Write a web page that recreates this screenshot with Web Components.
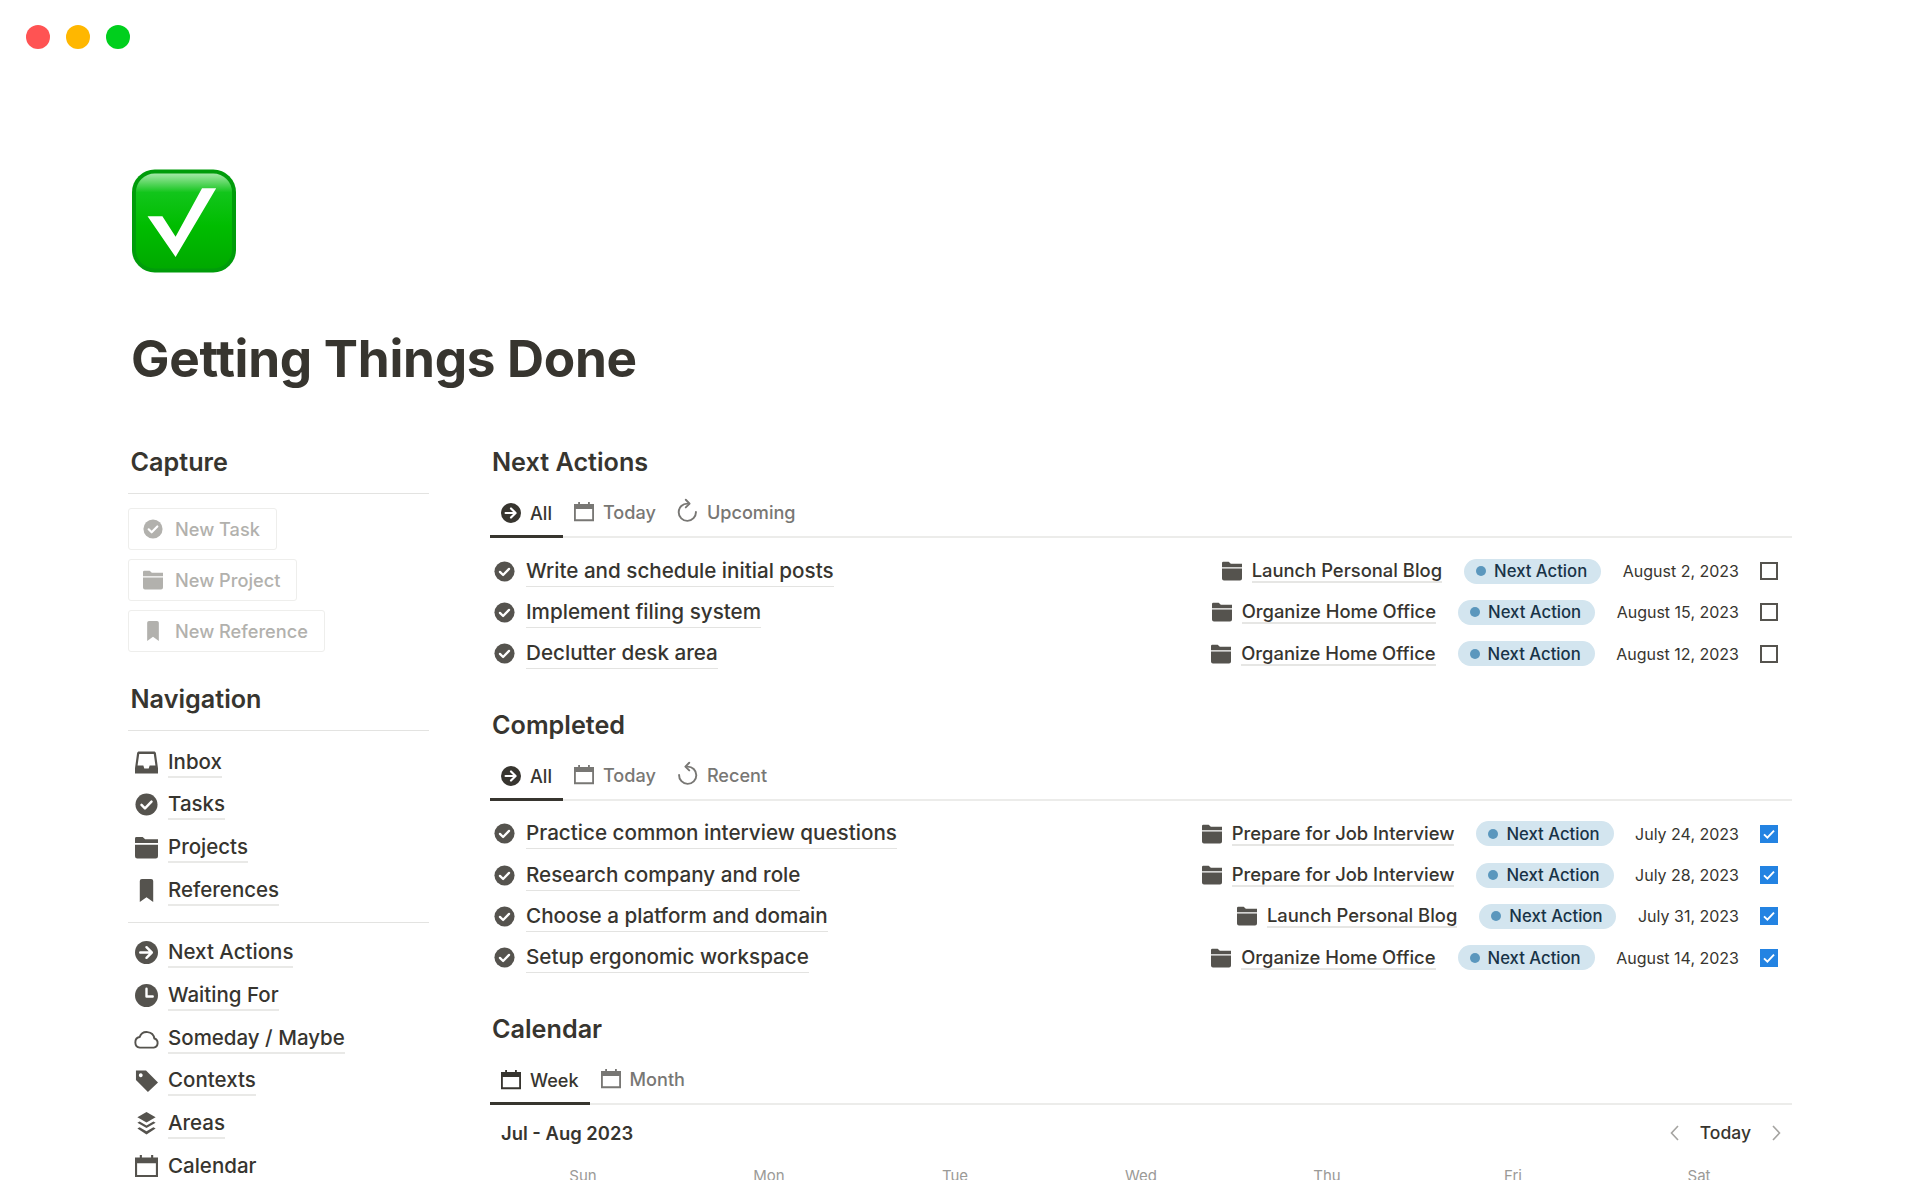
<!DOCTYPE html>
<html lang="en">
<head>
<meta charset="utf-8">
<title>Getting Things Done</title>
<style>
    html, body { margin: 0; background: #fff; }
    body { font-family: Inter, "Liberation Sans", sans-serif; color: #37352f; }
</style>
</head>
<body>
<gtd-page>
    <traffic-lights slot="chrome"></traffic-lights>
    <page-head slot="head" title="Getting Things Done"></page-head>

    <side-section slot="side" label="Capture">
        <capture-button icon="check">New Task</capture-button>
        <capture-button icon="folder">New Project</capture-button>
        <capture-button icon="bookmark">New Reference</capture-button>
    </side-section>
    <side-section slot="side" label="Navigation" style="--top: 10px">
        <nav-link icon="inbox">Inbox</nav-link>
        <nav-link icon="check">Tasks</nav-link>
        <nav-link icon="folder">Projects</nav-link>
        <nav-link icon="bookmark">References</nav-link>
        <side-rule></side-rule>
        <nav-link icon="arrow">Next Actions</nav-link>
        <nav-link icon="clock">Waiting For</nav-link>
        <nav-link icon="cloud">Someday / Maybe</nav-link>
        <nav-link icon="tag">Contexts</nav-link>
        <nav-link icon="stack">Areas</nav-link>
        <nav-link icon="calendar">Calendar</nav-link>
    </side-section>

    <view-section slot="main" label="Next Actions">
        <view-tab icon="arrow" active>All</view-tab>
        <view-tab icon="calendar">Today</view-tab>
        <view-tab icon="redo">Upcoming</view-tab>
        <task-row slot="body" project="Launch Personal Blog" date="August 2, 2023">Write and schedule initial posts</task-row>
        <task-row slot="body" project="Organize Home Office" date="August 15, 2023">Implement filing system</task-row>
        <task-row slot="body" project="Organize Home Office" date="August 12, 2023">Declutter desk area</task-row>
    </view-section>
    <view-section slot="main" label="Completed">
        <view-tab icon="arrow" active>All</view-tab>
        <view-tab icon="calendar">Today</view-tab>
        <view-tab icon="undo">Recent</view-tab>
        <task-row slot="body" done project="Prepare for Job Interview" date="July 24, 2023">Practice common interview questions</task-row>
        <task-row slot="body" done project="Prepare for Job Interview" date="July 28, 2023">Research company and role</task-row>
        <task-row slot="body" done project="Launch Personal Blog" date="July 31, 2023">Choose a platform and domain</task-row>
        <task-row slot="body" done project="Organize Home Office" date="August 14, 2023">Setup ergonomic workspace</task-row>
    </view-section>
    <view-section slot="main" label="Calendar">
        <view-tab icon="calendar" active>Week</view-tab>
        <view-tab icon="calendar">Month</view-tab>
        <week-calendar slot="body" range="Jul - Aug 2023"></week-calendar>
    </view-section>
</gtd-page>

<script>
const ICONS = {
    check: '<circle cx="12" cy="12" r="11.5"/><path d="M6.8 12.4l3.6 3.6 6.8-7" fill="none" stroke="#fff" stroke-width="2.6" stroke-linecap="round" stroke-linejoin="round"/>',
    folder: '<path d="M0 2.5A1.5 1.5 0 0 1 1.5 1H8l2.6 2.4H24v4H0z"/><path d="M0 9h24v12a2.4 2.4 0 0 1-2.4 2.4H2.4A2.4 2.4 0 0 1 0 21z"/>',
    bookmark: '<path d="M5 2.2A2.2 2.2 0 0 1 7.2 0h9.6A2.2 2.2 0 0 1 19 2.2V24l-7-5-7 5z"/>',
    inbox: '<path fill-rule="evenodd" d="M4.2 .5h15.6c1 0 1.8.7 2 1.700L24 18v5.500H0V18L2.200 2.200C2.400 1.200 3.200 .5 4.200 .5zM4.400 3L2.700 15h6l1 3.200h4.600l1-3.200h6L19.600 3z"/>',
    arrow: '<circle cx="12" cy="12" r="12"/><path d="M5.500 12h11.500M12 6.500l5.500 5.500-5.500 5.500" fill="none" stroke="#fff" stroke-width="2.600" stroke-linecap="round" stroke-linejoin="round"/>',
    clock: '<circle cx="12" cy="12" r="12"/><path d="M12 5v8h6.500" fill="none" stroke="#fff" stroke-width="2.500" stroke-linecap="round" stroke-linejoin="round"/>',
    cloud: '<path d="M5 21.500h14.500A4.900 4.900 0 0 0 20.200 12 8 8 0 0 0 4.800 10.500 5.600 5.600 0 0 0 5 21.500z" fill="none" stroke="currentColor" stroke-width="2" stroke-linejoin="round"/>',
    tag: '<path fill-rule="evenodd" d="M1 1.500h10.500L24 14 13.500 24 1 11.500zM6 4.500a2 2 0 1 0 .01 0z"/>',
    stack: '<path d="M12 0l9.500 5.500L12 11 2.500 5.500z"/><path d="M4.800 9.800L12 14l7.200-4.200 2.300 1.400L12 16.800l-9.500-5.600z"/><path d="M4.800 15.800L12 20l7.200-4.200 2.300 1.400L12 23.500l-9.500-6.300z"/>',
    calendar: '<path fill-rule="evenodd" d="M5 0h2.200v2.500h9.600V0H19v2.500h5V23H0V2.500h5zM2.200 8.500v12.300h19.600V8.500z"/>',
    redo: '<path d="M20.800 13.500A9 9 0 1 1 12 4.800" fill="none" stroke="currentColor" stroke-width="2" stroke-linecap="round"/><path d="M10.200 .8l4 4-4 4" fill="none" stroke="currentColor" stroke-width="2" stroke-linecap="round" stroke-linejoin="round"/>',
    undo: '<path d="M3.200 13.500A9 9 0 1 0 12 4.800" fill="none" stroke="currentColor" stroke-width="2" stroke-linecap="round"/><path d="M13.800 .8l-4 4 4 4" fill="none" stroke="currentColor" stroke-width="2" stroke-linecap="round" stroke-linejoin="round"/>'
};

function iconSvg(name, size) {
    return `<svg width="${size}" height="${size}" viewBox="0 0 24 24" fill="currentColor" style="display:block;flex:none;overflow:visible">${ICONS[name]}</svg>`;
}

// Small helper so every element below is the same few lines
function define(tag, render) {
    customElements.define(tag, class extends HTMLElement {
        constructor() {
            super();
            this.attachShadow({ mode: 'open' });
        }
        connectedCallback() {
            this.shadowRoot.innerHTML = render(this);
        }
    });
}

define('gtd-page', () => `
    <style>
        :host { display: block; width: 1920px; height: 1180px; overflow: hidden; }
        .cols { display: grid; grid-template-columns: 301px 1302px; column-gap: 61px; padding-left: 128px; }
        .stack { display: flex; flex-direction: column; }
    </style>
    <slot name="chrome"></slot>
    <slot name="head"></slot>
    <div class="cols">
        <div class="stack"><slot name="side"></slot></div>
        <div class="stack"><slot name="main"></slot></div>
    </div>
`);

define('traffic-lights', () => `
    <style>
        :host { display: flex; gap: 16px; padding: 25px 0 0 26px; height: 24px; }
        i { width: 24px; height: 24px; border-radius: 50%; }
    </style>
    <i style="background:#ff5353"></i>
    <i style="background:#ffb700"></i>
    <i style="background:#00cf1d"></i>
`);

define('page-head', el => `
    <style>
        :host { display: block; padding: 120px 0 0 132px; height: 271px; box-sizing: content-box; }
        svg { display: block; }
        h1 { margin: 54px 0 0 -1px; font-size: 51.300px; line-height: 60px; font-weight: 700; letter-spacing: -0.3px; color: #37352f; }
    </style>
    <svg width="104" height="105" viewBox="0 0 105 105">
        <defs>
            <linearGradient id="g" x1="0" y1="0" x2="0" y2="1">
                <stop offset="0" stop-color="#a5e8a8"/>
                <stop offset=".2" stop-color="#12c51b"/>
                <stop offset=".55" stop-color="#00bd00"/>
                <stop offset="1" stop-color="#00a900"/>
            </linearGradient>
        </defs>
        <rect x="0" y="0" width="105" height="104" rx="23" fill="#009c0a"/>
        <rect x="4" y="4" width="97" height="96" rx="19" fill="url(#g)"/>
        <path d="M15.700 47.300H30.700L44 68 70.700 19H85L44 88.300z" fill="#fff"/>
    </svg>
    <h1>${el.getAttribute('title')}</h1>
`);

define('side-section', el => `
    <style>
        :host { display: block; }
        h2 { margin: 0; padding-left: 2.500px; font-size: 25.200px; line-height: 44px; height: 54px; font-weight: 600; box-sizing: border-box; border-bottom: 1px solid #e3e3e1; }
        .body { display: block; padding-top: var(--top, 14px); padding-bottom: 16px; }
    </style>
    <h2>${el.getAttribute('label')}</h2>
    <div class="body"><slot></slot></div>
`);

define('side-rule', () => `
    <style>:host { display: block; height: 1px; background: #e3e3e1; margin: 10px 0 9px; }</style>
`);

define('capture-button', el => `
    <style>
        :host { display: table; height: 42px; margin-bottom: 9px; box-sizing: border-box; border: 1px solid #eeeeec; border-radius: 3px; color: #b2b1ad; }
        div { display: flex; align-items: center; height: 40px; padding: 0 16px 0 14px; gap: 12px; font-size: 18.200px; font-weight: 500; }
    </style>
    <div>${iconSvg(el.getAttribute('icon'), 20)}<span><slot></slot></span></div>
`);

define('nav-link', el => `
    <style>
        :host { display: flex; align-items: center; height: 42.670px; padding-left: 7px; gap: 10px; color: #37352f; }
        .ic { color: #55534e; flex: none; }
        span { font-size: 20.500px; font-weight: 500; line-height: 29px; border-bottom: 2px solid #e9e9e7; }
    </style>
    <div class="ic">${iconSvg(el.getAttribute('icon'), 23)}</div>
    <span><slot></slot></span>
`);

define('view-section', el => `
    <style>
        :host { display: block; }
        h2 { margin: 0; padding-left: 2px; font-size: 25.200px; line-height: 44px; font-weight: 600; }
        .tabs { display: flex; height: 54px; box-sizing: border-box; border-bottom: 2px solid #ececea; }
        .body { display: block; padding: 12.500px 0 28.500px; }
    </style>
    <h2>${el.getAttribute('label')}</h2>
    <div class="tabs"><slot></slot></div>
    <div class="body"><slot name="body"></slot></div>
`);

define('view-tab', el => {
    // the redo and undo glyphs stand a little taller than the others
    const name = el.getAttribute('icon');
    const round = name === 'redo' || name === 'undo';
    return `
    <style>
        :host { display: flex; align-items: center; gap: 9px; height: 52px; padding: 4px 11px 0; box-sizing: border-box; font-size: 18.100px; font-weight: 500; color: #787774; }
        :host([active]) { color: #37352f; box-shadow: inset 0 -3px 0 #37352f; height: 54px; }
        .ic { width: 20px; display: flex; justify-content: center; margin-top: ${round ? -3 : 0}px; }
    </style>
    <div class="ic">${iconSvg(name, round ? 23 : 20)}</div>
    <span><slot></slot></span>
`;
});

define('task-row', el => `
    <style>
        :host { display: flex; align-items: center; height: 41.250px; padding: 0 14px 0 4px; }
        .check { color: #55534e; margin-right: 11px; }
        .title { font-size: 20.650px; font-weight: 500; line-height: 30px; border-bottom: 1px solid #e3e3e1; }
        .meta { margin-left: auto; display: flex; align-items: center; }
        .folder { color: #55534e; margin-right: 10px; }
        .project { font-size: 18.400px; font-weight: 500; line-height: 21px; border-bottom: 2px solid #e6e6e4; margin-top: 1px; }
        .pill { display: flex; align-items: center; gap: 8px; height: 25px; margin-left: 22px; padding: 0 14px 0 12px; border-radius: 13px; background: #d3e5ef; color: #183347; font-size: 16.700px; font-weight: 500; }
        .pill i { width: 10px; height: 10px; border-radius: 50%; background: #5b97bd; }
        .date { margin-left: 21.500px; font-size: 16px; color: #37352f; }
        .box { margin-left: 21px; width: 18px; height: 18px; box-sizing: border-box; border: 2px solid #55534e; }
        .box.on { border: 0; background: #2383e2; display: flex; align-items: center; justify-content: center; }
    </style>
    <div class="check">${iconSvg('check', 21)}</div>
    <span class="title"><slot></slot></span>
    <div class="meta">
        <div class="folder">${iconSvg('folder', 20)}</div>
        <span class="project">${el.getAttribute('project')}</span>
        <div class="pill"><i></i><span>Next Action</span></div>
        <span class="date">${el.getAttribute('date')}</span>
        ${el.hasAttribute('done')
            ? '<div class="box on"><svg width="14" height="14" viewBox="0 0 14 14"><path d="M2 7.300l3.400 3.400L12 3.600" fill="none" stroke="#fff" stroke-width="1.900"/></svg></div>'
            : '<div class="box"></div>'}
    </div>
`);

define('week-calendar', el => `
    <style>
        :host { display: block; margin-top: -12.500px; }
        .bar { display: flex; align-items: center; height: 56px; padding: 0 11px; }
        b { font-size: 18.400px; font-weight: 600; }
        .nav { margin-left: auto; display: flex; align-items: center; font-size: 17.500px; font-weight: 500; }
        .nav svg { display: block; }
        .nav span { margin: 0 21px; }
        .days { display: grid; grid-template-columns: repeat(7, 1fr); text-align: center; font-size: 15px; line-height: 20px; color: #9b9a97; padding-top: 5px; }
    </style>
    <div class="bar">
        <b>${el.getAttribute('range')}</b>
        <div class="nav">
            <svg width="9" height="16" viewBox="0 0 9 16"><path d="M8 1L1.500 8 8 15" fill="none" stroke="#a5a4a1" stroke-width="1.600"/></svg>
            <span>Today</span>
            <svg width="9" height="16" viewBox="0 0 9 16"><path d="M1 1l6.500 7L1 15" fill="none" stroke="#a5a4a1" stroke-width="1.600"/></svg>
        </div>
    </div>
    <div class="days">
        <span>Sun</span><span>Mon</span><span>Tue</span><span>Wed</span><span>Thu</span><span>Fri</span><span>Sat</span>
    </div>
`);
</script>
</body>
</html>
